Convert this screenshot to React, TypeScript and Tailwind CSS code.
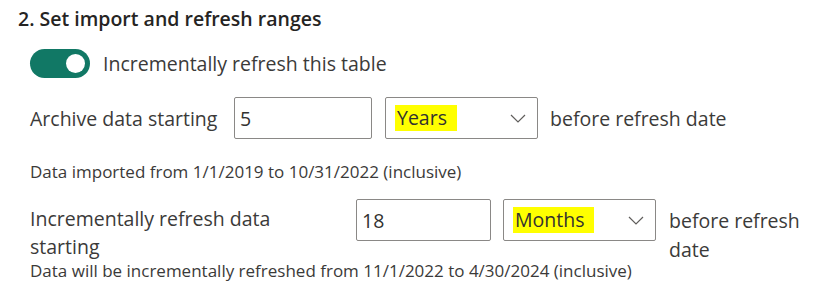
import React from 'react';

const font = { fontFamily: '"Open Sans", "Noto Sans", sans-serif' };

function Chevron() {
  return (
    <svg width="20" height="20" viewBox="0 0 20 20" className="text-[#605e5c]">
      <path d="M3 7 L10 14 L17 7" fill="none" stroke="currentColor" strokeWidth="1.2" />
    </svg>
  );
}

function NumberBox({ value, width }: { value: string; width: string }) {
  return (
    <div className={`${width} h-[42px] shrink-0 border border-[#8a8886] rounded-[2px] flex items-center pl-[5px] text-[19.5px] text-[#323130]`}>
      {value}
    </div>
  );
}

function UnitSelect({ value }: { value: string }) {
  return (
    <div className="w-[153px] h-[42px] shrink-0 border border-[#8a8886] rounded-[2px] flex items-center justify-between pl-[9px] pr-[9px] text-[19.5px] text-[#323130]">
      <span className="bg-[#ffff00] pl-[2px] pr-[10px] leading-[26px]">{value}</span>
      <Chevron />
    </div>
  );
}

export default function App() {
  return (
    <div className="w-[818px] h-[300px] bg-white overflow-hidden text-[#3b3a39]" style={font}>
      <div className="pl-[18px] pt-[4px] text-[19.5px] font-semibold text-[#252423] leading-[30px]">
        2. Set import and refresh ranges
      </div>

      <div className="pl-[30px] mt-[15px] flex items-center gap-[13px]">
        <div className="w-[60px] h-[29px] rounded-full bg-[#117865] flex items-center justify-end pr-[5px]">
          <div className="w-[19px] h-[19px] rounded-full bg-white" />
        </div>
        <span className="text-[19.5px]">Incrementally refresh this table</span>
      </div>

      <div className="pl-[30px] mt-[19px] flex items-center">
        <span className="w-[204px] shrink-0 text-[19.5px]">Archive data starting</span>
        <NumberBox value="5" width="w-[138px]" />
        <div className="ml-[13px]">
          <UnitSelect value="Years" />
        </div>
        <span className="ml-[12px] text-[19.5px]">before refresh date</span>
      </div>

      <div className="pl-[30px] mt-[22px] text-[17px] leading-[22px]">
        Data imported from 1/1/2019 to 10/31/2022 (inclusive)
      </div>

      <div className="pl-[30px] mt-[16px] flex items-start">
        <div className="w-[326px] shrink-0 text-[19.5px] leading-[28px] pt-[6px]">
          Incrementally refresh data
          <br />
          starting
        </div>
        <NumberBox value="18" width="w-[135px]" />
        <div className="ml-[12px]">
          <UnitSelect value="Months" />
        </div>
        <div className="ml-[13px] text-[19.5px] leading-[29px] pt-[7px]">
          before refresh
          <br />
          date
        </div>
      </div>

      <div className="pl-[30px] -mt-[1px] text-[17px] leading-[16px]">
        Data will be incrementally refreshed from 11/1/2022 to 4/30/2024 (inclusive)
      </div>
    </div>
  );
}
